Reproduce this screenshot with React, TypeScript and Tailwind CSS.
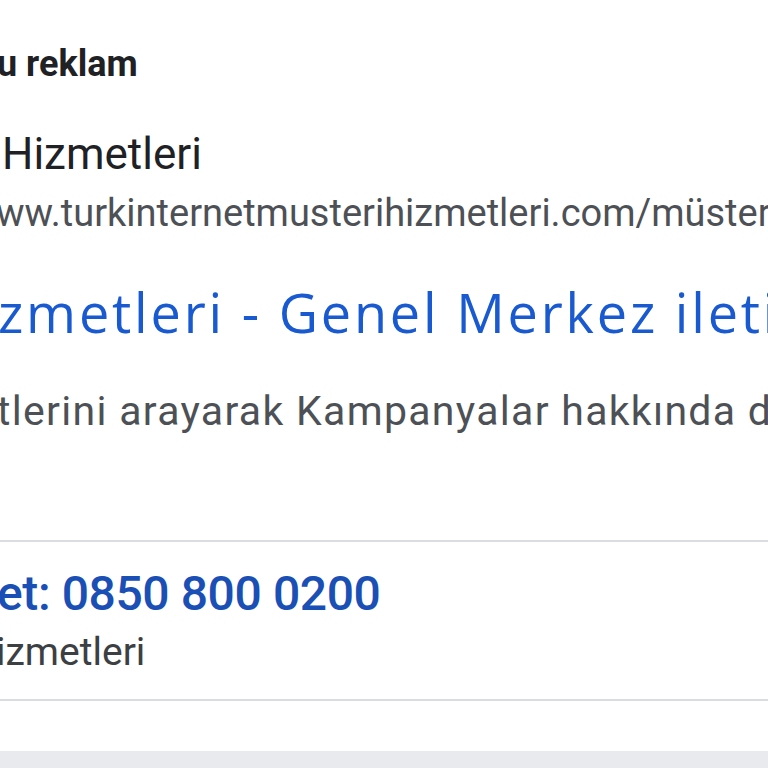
import React from "react";

const roboto = { fontFamily: "Roboto, 'Noto Sans', sans-serif" };
const sans = { fontFamily: "'Open Sans', Roboto, sans-serif" };

export default function App() {
  return (
    <div className="h-[768px] w-[768px] overflow-hidden bg-white" style={roboto}>
      <div className="flex flex-col whitespace-nowrap">
        {/* sponsor label */}
        <div className="mt-[46px] h-[36px] -ml-[3px] text-[36px] font-bold leading-none text-[#202124]">
          u reklam
        </div>

        {/* advertiser */}
        <div className="mt-[50px] h-[44px] ml-[2px] text-[44px] leading-none text-[#202124]">
          Hizmetleri
        </div>
        <div className="mt-[18px] h-[38px] -ml-[4px] text-[38px] leading-none text-[#4d5156]">
          ww.turkinternetmusterihizmetleri.com/müsteri-hizmetleri
        </div>

        {/* title */}
        <div
          className="mt-[53px] h-[54px] -ml-[2px] text-[54px] leading-none tracking-[2.8px] text-[#1a5ad0]"
          style={sans}
        >
          zmetleri - Genel Merkez iletişim
        </div>

        {/* description */}
        <div className="mt-[52px] h-[41px] -ml-[3px] text-[41px] leading-none tracking-[1.3px] text-[#4d5156]">
          tlerini arayarak Kampanyalar hakkında detaylı bilgi alın
        </div>

        <div className="mt-[108px] h-[2px] w-full bg-[#dadce0]" />

        {/* call row */}
        <div className="mt-[28px] h-[48px] -ml-[3px] text-[48px] font-medium leading-none tracking-[-0.4px] text-[#1a4fb5]">
          et: 0850 800 0200
        </div>
        <div className="mt-[15px] h-[38px] -ml-[4px] text-[39px] leading-none text-[#3c4043]">
          izmetleri
        </div>

        <div className="mt-[28px] h-[2px] w-full bg-[#dadce0]" />

        <div className="mt-[50px] h-[40px] w-full bg-[#e8eaed]" />
      </div>
    </div>
  );
}
